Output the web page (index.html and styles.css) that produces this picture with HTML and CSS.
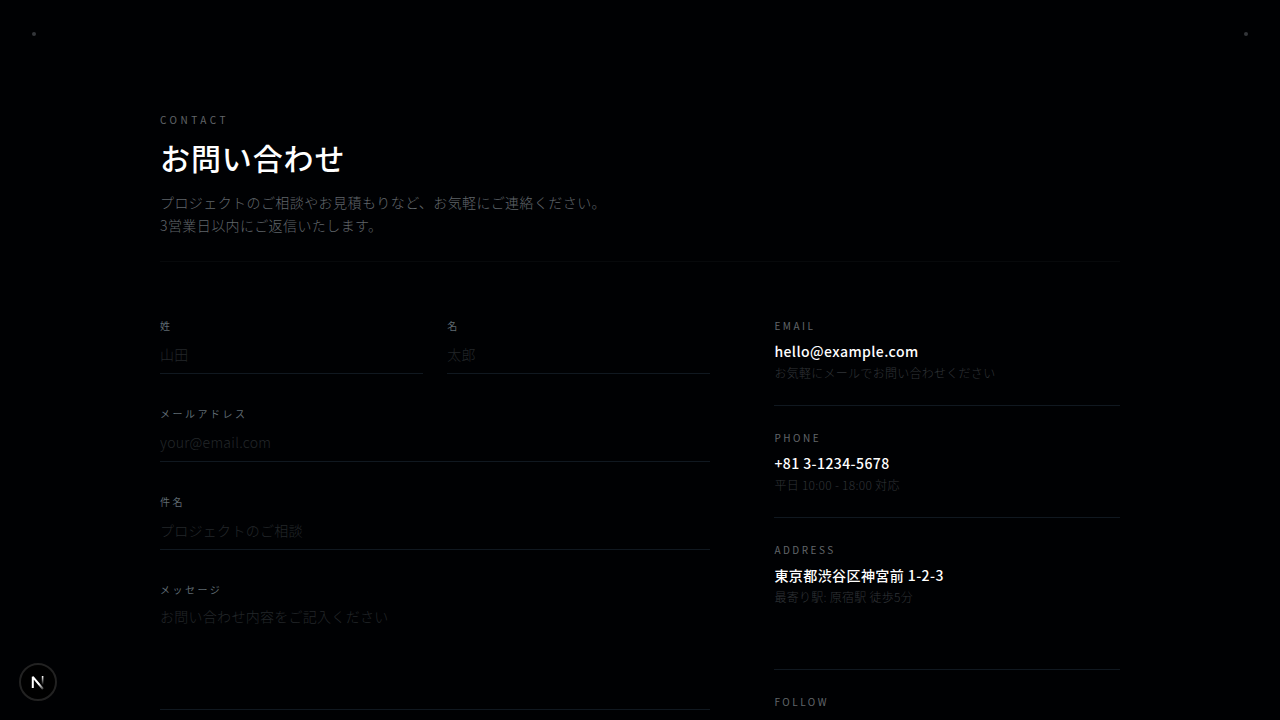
FILE: index.html
```html
<!DOCTYPE html>
<html lang="ja">
<head>
<meta charset="utf-8">
<meta name="viewport" content="width=device-width, initial-scale=1">
<title>お問い合わせ</title>
<link rel="stylesheet" href="styles.css">
</head>
<body>
<div class="corners"><span class="dot"></span><span class="dot"></span></div>
<main class="page">
  <header class="intro">
    <p class="eyebrow">CONTACT</p>
    <h1 class="title">お問い合わせ</h1>
    <p class="lead">プロジェクトのご相談やお見積もりなど、お気軽にご連絡ください。<br>3営業日以内にご返信いたします。</p>
  </header>
  <div class="columns">
    <form class="form">
      <div class="names">
        <div class="field">
          <label class="label" for="last">姓</label>
          <input class="input" id="last" type="text" placeholder="山田">
        </div>
        <div class="field">
          <label class="label" for="first">名</label>
          <input class="input" id="first" type="text" placeholder="太郎">
        </div>
      </div>
      <div class="field">
        <label class="label" for="email">メールアドレス</label>
        <input class="input" id="email" type="email" placeholder="your@email.com">
      </div>
      <div class="field">
        <label class="label" for="subject">件名</label>
        <input class="input" id="subject" type="text" placeholder="プロジェクトのご相談">
      </div>
      <div class="field">
        <label class="label" for="message">メッセージ</label>
        <textarea class="input message" id="message" placeholder="お問い合わせ内容をご記入ください"></textarea>
      </div>
    </form>
    <aside class="info">
      <section class="item">
        <h2 class="caption">EMAIL</h2>
        <a class="value" href="mailto:hello@example.com">hello@example.com</a>
        <p class="note">お気軽にメールでお問い合わせください</p>
      </section>
      <section class="item">
        <h2 class="caption">PHONE</h2>
        <a class="value" href="tel:+81312345678">+81 3-1234-5678</a>
        <p class="note">平日 10:00 - 18:00 対応</p>
      </section>
      <section class="item address">
        <h2 class="caption">ADDRESS</h2>
        <p class="value">東京都渋谷区神宮前 1-2-3</p>
        <p class="note">最寄り駅: 原宿駅 徒歩5分</p>
      </section>
      <section class="item follow">
        <h2 class="caption">FOLLOW</h2>
      </section>
    </aside>
  </div>
</main>
<button class="badge" type="button" aria-label="Next.js">
  <svg width="36" height="36" viewBox="0 0 36 36" fill="none">
    <defs>
      <linearGradient id="stem" x1="0" y1="12" x2="0" y2="21" gradientUnits="userSpaceOnUse"><stop stop-color="#fff"/><stop offset="1" stop-color="#fff" stop-opacity="0"/></linearGradient>
      <linearGradient id="diagonal" x1="19" y1="20" x2="24" y2="26" gradientUnits="userSpaceOnUse"><stop stop-color="#fff"/><stop offset="1" stop-color="#fff" stop-opacity="0.1"/></linearGradient>
    </defs>
    <path d="M12.8 24V12.8L23 25" stroke="url(#diagonal)" stroke-width="2" stroke-linejoin="bevel"/>
    <path d="M22.6 12v9" stroke="url(#stem)" stroke-width="1.6"/>
  </svg>
</button>
</body>
</html>
```
FILE: styles.css
```css
* {
  box-sizing: border-box;
  margin: 0;
  padding: 0;
}

html {
  background: #000103;
}

body {
  color: #fff;
  font-family: "Noto Sans CJK JP", sans-serif;
  font-size: 14px;
  font-weight: 300;
  letter-spacing: 0.02em;
}

.corners {
  position: absolute;
  top: 32px;
  left: 32px;
  right: 32px;
  display: flex;
  justify-content: space-between;
}

.dot {
  width: 4px;
  height: 4px;
  border-radius: 50%;
  background: #33363a;
}

.page {
  max-width: 1024px;
  margin: 0 auto;
  padding: 112px 32px 64px;
}

.intro {
  padding-bottom: 24px;
  border-bottom: 1px solid #07090b;
}

.eyebrow,
.caption,
.label {
  display: block;
  font-size: 10px;
  font-weight: 400;
  line-height: 16px;
  color: #62666a;
}

.eyebrow {
  letter-spacing: 0.35em;
}

.caption {
  letter-spacing: 0.25em;
}

.label {
  letter-spacing: 0.25em;
  color: #5f6a72;
}

.title {
  margin-top: 7px;
  font-size: 30px;
  font-weight: 500;
  line-height: 44px;
  letter-spacing: 0.03em;
}

.lead {
  margin-top: 12px;
  line-height: 23px;
  letter-spacing: 0.03em;
  color: #60666b;
}

.columns {
  display: grid;
  grid-template-columns: repeat(5, 1fr);
  column-gap: 64px;
  margin-top: 56px;
}

.form {
  grid-column: span 3;
  display: flex;
  flex-direction: column;
  gap: 32px;
}

.names {
  display: grid;
  grid-template-columns: 1fr 1fr;
  gap: 24px;
}

.input {
  display: block;
  width: 100%;
  height: 40px;
  padding: 0;
  border: 0;
  border-bottom: 1px solid #101820;
  border-radius: 0;
  outline: 0;
  background: transparent;
  color: #fff;
  font: inherit;
  line-height: 20px;
  letter-spacing: inherit;
}

.input::placeholder {
  color: #23272a;
}

.message {
  height: 112px;
  padding-top: 8px;
  resize: none;
}

.info {
  grid-column: span 2;
}

.item {
  padding-bottom: 22px;
  border-bottom: 1px solid #101820;
}

.item + .item {
  padding-top: 24px;
}

.address {
  padding-bottom: 62px;
}

.follow {
  border-bottom: 0;
}

.value {
  display: block;
  margin-top: 7px;
  color: #fff;
  font-weight: 500;
  line-height: 20px;
  letter-spacing: 0.03em;
  text-decoration: none;
}

.note {
  margin-top: 2px;
  font-size: 12px;
  line-height: 20px;
  color: #303438;
}

.badge {
  position: fixed;
  left: 19px;
  bottom: 19px;
  width: 38px;
  height: 38px;
  border: 2px solid #222;
  border-radius: 50%;
  background: #000;
  display: flex;
  align-items: center;
  justify-content: center;
}

.badge svg {
  flex: none;
}
```
